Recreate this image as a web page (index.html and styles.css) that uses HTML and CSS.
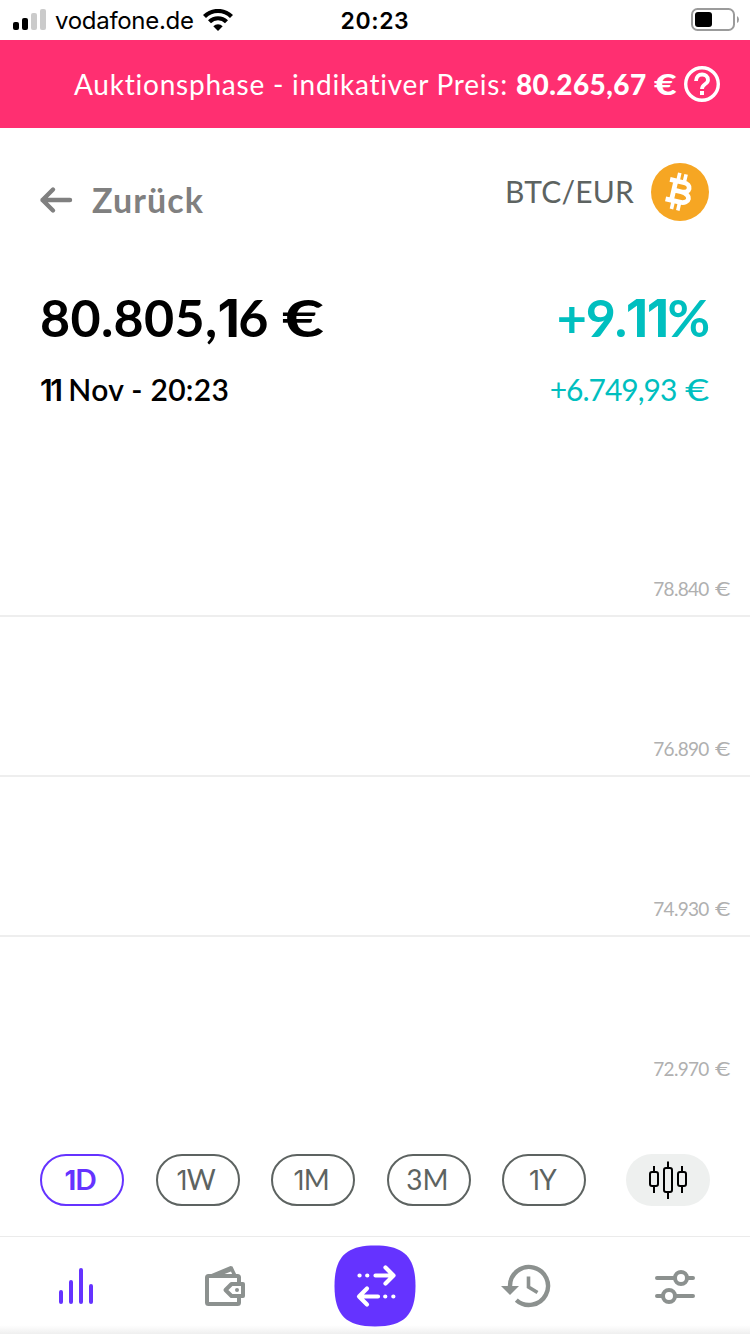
FILE: index.html
```
<!DOCTYPE html>
<html lang="de">
<head>
    <meta charset="UTF-8">
    <meta name="viewport" content="width=device-width, initial-scale=1.0">
    <title>BTC/EUR</title>
    <link rel="stylesheet" href="styles.css">
</head>
<body>
    <div class="status-bar">
        <div class="carrier">
            <svg class="signal" width="34" height="22" viewBox="0 0 34 22">
                <rect x="0" y="13" width="6" height="8" rx="2"/>
                <rect x="9" y="9" width="6" height="12" rx="2"/>
                <rect x="18" y="4" width="6" height="17" rx="2" fill="#cbcbcb"/>
                <rect x="27" y="0" width="6" height="21" rx="2" fill="#cbcbcb"/>
            </svg>
            <span class="carrier-name">vodafone.de</span>
            <svg class="wifi" width="30" height="22" viewBox="0 0 30 22">
                <path d="M1.5 7.6 A19 19 0 0 1 28.5 7.6" fill="none" stroke="#000" stroke-width="4.2"/>
                <path d="M6.5 12.8 A12 12 0 0 1 23.5 12.8" fill="none" stroke="#000" stroke-width="4.2"/>
                <path d="M10.3 17.2 A6.8 6.8 0 0 1 19.7 17.2 L15 22 Z"/>
            </svg>
        </div>
        <div class="clock">20:23</div>
        <svg class="battery" width="49" height="24" viewBox="0 0 49 24">
            <rect x="1" y="1" width="42" height="21" rx="5.5" fill="none" stroke="#9b9b9b" stroke-width="2"/>
            <rect x="4" y="4" width="17" height="15" rx="3"/>
            <path d="M46 8 Q48 9 48 11.5 T46 15 Z" fill="#9b9b9b"/>
        </svg>
    </div>

    <div class="banner">
        <span class="banner-text">Auktionsphase - indikativer Preis:</span>
        <span class="banner-price">80.265,67 <span class="euro">€</span></span>
        <svg class="help" width="36" height="36" viewBox="0 0 36 36" fill="none" stroke="#fff">
            <circle cx="18" cy="18" r="16.3" stroke-width="3.4"/>
            <path d="M12 15 C12 6.5 24 6.5 24 14 C24 18.5 18 17.5 18 23" stroke-width="3.8"/>
            <rect x="16" y="25" width="4" height="4" fill="#fff" stroke="none"/>
        </svg>
    </div>

    <main>
        <header>
            <div class="back">
                <svg width="34" height="28" viewBox="0 0 34 28" fill="none" stroke="#808080" stroke-width="4.4" stroke-linecap="round" stroke-linejoin="round">
                    <path d="M31 14 H3.5 M14 3.5 L3.5 14 L14 24.5"/>
                </svg>
                <span class="back-text">Zurück</span>
            </div>
            <div class="pair">
                <span class="pair-name">BTC/EUR</span>
                <svg width="58" height="58" viewBox="0 0 58 58">
                    <circle cx="29" cy="29" r="29" fill="#f6a623"/>
                    <g transform="rotate(13 29 29)" fill="none" stroke="#fff">
                        <path d="M16.5 19 H30 C39.5 19 39.5 28.5 30 28.5 H23 M30 28.5 C41.5 28.5 41.5 39 31 39 H16.5 M22.5 19 V39" stroke-width="4.8"/>
                        <path d="M24.5 10.5 V19 M31 10.5 V19 M24.5 39 V47.5 M31 39 V47.5" stroke-width="3.6"/>
                    </g>
                </svg>
            </div>
        </header>

        <section class="quote">
            <div class="quote-row">
                <span class="price">80.805,<span class="one">1</span>6 <span class="euro">€</span></span>
                <span class="percent">+9.<span class="one">11</span>%</span>
            </div>
            <div class="quote-row">
                <span class="date"><span class="one">11</span> Nov - 20:23</span>
                <span class="change">+6.749,93 <span class="euro">€</span></span>
            </div>
        </section>

        <section class="chart">
            <div class="grid-row"><span>78.840 <span class="euro">€</span></span></div>
            <div class="grid-row"><span>76.890 <span class="euro">€</span></span></div>
            <div class="grid-row"><span>74.930 <span class="euro">€</span></span></div>
            <div class="grid-row"><span>72.970 <span class="euro">€</span></span></div>
        </section>

        <section class="ranges">
            <button class="range active"><span class="one">1</span>D</button>
            <button class="range"><span class="one">1</span>W</button>
            <button class="range"><span class="one">1</span>M</button>
            <button class="range">3M</button>
            <button class="range"><span class="one">1</span>Y</button>
            <button class="candles">
                <svg width="40" height="40" viewBox="0 0 40 40" fill="none" stroke="#000" stroke-width="2">
                    <rect x="2" y="12" width="8" height="14" rx="2"/>
                    <path d="M6 6 V12 M6 26 V33"/>
                    <rect x="16" y="8" width="8" height="24" rx="2"/>
                    <path d="M20 1.5 V8 M20 32 V39"/>
                    <rect x="30" y="12" width="8" height="14" rx="2"/>
                    <path d="M34 6 V12 M34 26 V33"/>
                </svg>
            </button>
        </section>
    </main>

    <nav>
        <a class="tab">
            <svg width="36" height="36" viewBox="-2 0 36 36" stroke="#6533ff" stroke-width="4" stroke-linecap="round">
                <path d="M2 24 V34 M12 14 V34 M22 2 V34 M32 18 V34"/>
            </svg>
        </a>
        <a class="tab">
            <svg width="40" height="40" viewBox="0 0 40 40" fill="none" stroke="#8c918f" stroke-width="4" stroke-linejoin="round">
                <rect x="2" y="10" width="32" height="28" rx="1.5"/>
                <path d="M4 9 L25.5 0 L27.5 0.5 L32 10 H28 L26 5.5 L17 9 Z" fill="#8c918f" stroke="none"/>
                <path d="M38 18 H26.5 L20.5 24 L26.5 30 H38 Z" fill="#fff"/>
                <circle cx="32" cy="24" r="2" fill="#8c918f" stroke="none"/>
            </svg>
        </a>
        <a class="tab">
            <svg width="82" height="82" viewBox="0 0 82 82">
                <path d="M41 0.5 C70 0.5 81.5 12 81.5 41 C81.5 70 70 81.5 41 81.5 C12 81.5 0.5 70 0.5 41 C0.5 12 12 0.5 41 0.5 Z" fill="#6533ff"/>
                <g fill="none" stroke="#fff" stroke-width="4.2" stroke-linecap="round" stroke-linejoin="round">
                    <path d="M41.5 30.5 H59 M51.5 22.5 L59.5 30.5 L51.5 38.5"/>
                    <path d="M44 51.5 H26 M33 43.5 L25 51.5 L33 59.5"/>
                    <path d="M25.5 30.5 h0.1 M33.2 30.5 h0.1 M51.2 51.5 h0.1 M59.3 51.5 h0.1"/>
                </g>
            </svg>
        </a>
        <a class="tab">
            <svg width="52" height="44" viewBox="-2 -2 52 44" fill="none" stroke="#8c918f" stroke-width="4.4">
                <path d="M9 20 A19 19 0 1 1 15.3 34.1"/>
                <path d="M0 20 H18 L9 29 Z" fill="#8c918f" stroke="none"/>
                <path d="M27.5 10.5 V21 L36.5 26.5" stroke-width="3.6"/>
            </svg>
        </a>
        <a class="tab">
            <svg width="40" height="36" viewBox="0 -2 40 36" fill="none" stroke="#8c918f" stroke-width="4" stroke-linecap="round">
                <circle cx="26" cy="8" r="6"/>
                <path d="M2 8 H20 M32 8 H38"/>
                <circle cx="14" cy="26" r="6"/>
                <path d="M2 26 H8 M20 26 H38"/>
            </svg>
        </a>
    </nav>
</body>
</html>
```
FILE: styles.css
```
* {
    box-sizing: border-box;
}
body {
    font-family: Lato, "Open Sans", sans-serif;
    background-color: #fff;
    color: #000;
    margin: 0;
    height: 1334px;
    overflow: hidden;
    display: flex;
    flex-direction: column;
    white-space: nowrap;
}
svg {
    display: block;
    flex: none;
}
/* wide euro sign */
.euro {
    display: inline-block;
    width: 0.8em;
    letter-spacing: 0;
    transform: scaleX(1.4);
    transform-origin: 0 50%;
}
/* narrow one without a foot */
.one {
    font-family: Inter, sans-serif;
    line-height: 1;
    letter-spacing: -0.03em;
}
.status-bar {
    font-family: Inter, sans-serif;
    height: 40px;
    padding: 0 10px 0 13px;
    display: grid;
    grid-template-columns: 1fr 72px 1fr;
    align-items: center;
}
.carrier {
    display: flex;
    align-items: center;
}
.carrier-name {
    font-size: 24px;
    letter-spacing: -0.3px;
    width: 139px;
    margin: 0 9px 0 8px;
}
.clock {
    font-size: 23px;
    font-weight: 600;
    letter-spacing: 0.6px;
    padding-top: 2px;
}
.battery {
    justify-self: end;
}
.banner {
    height: 88px;
    padding-right: 30px;
    background: #ff2f71;
    color: #fff;
    font-size: 28px;
    display: flex;
    justify-content: flex-end;
    align-items: center;
}
.banner-text {
    letter-spacing: 0.78px;
}
.banner-price {
    font-weight: 900;
    letter-spacing: 0.4px;
    margin: 0 8px 0 8px;
}
header {
    height: 144px;
    padding: 35px 41px 0 39px;
    display: flex;
    justify-content: space-between;
    align-items: flex-start;
}
.back {
    height: 74px;
    display: flex;
    align-items: center;
    gap: 19px;
    color: #808080;
}
.back-text {
    font-size: 34px;
    font-weight: 700;
    letter-spacing: 1.1px;
    padding-bottom: 2px;
}
.pair {
    display: flex;
    align-items: center;
    gap: 17px;
}
.pair-name {
    font-size: 30px;
    letter-spacing: 0.2px;
    padding-bottom: 2px;
    color: #5d6361;
}
.quote {
    height: 185px;
    padding: 0 41px 0 40px;
}
.quote-row {
    display: flex;
    justify-content: space-between;
    align-items: center;
    height: 92px;
    padding-bottom: 3px;
}
.quote-row + .quote-row {
    height: 52px;
}
.price {
    font-size: 52px;
    font-weight: 700;
    letter-spacing: 0.3px;
}
.percent {
    font-size: 52px;
    font-weight: 700;
    letter-spacing: -1.2px;
    color: #00bfbf;
}
.date {
    font-size: 30px;
    font-weight: 600;
    letter-spacing: 0.3px;
}
.date .one {
    letter-spacing: -0.08em;
}
.change {
    font-size: 30px;
    letter-spacing: -1px;
    color: #00bfbf;
}
.change .euro {
    margin-left: 2px;
}
.grid-row {
    height: 160px;
    padding: 0 20px 15px 0;
    border-bottom: 2px solid #eee;
    display: flex;
    justify-content: flex-end;
    align-items: flex-end;
    font-size: 19px;
    letter-spacing: -0.7px;
    color: #b0b0b0;
}
.grid-row .euro {
    margin-left: 2px;
}
.grid-row:last-child {
    border-color: transparent;
}
.ranges {
    padding: 57px 40px 0;
    display: flex;
}
.range, .candles {
    width: 84px;
    height: 52px;
    padding: 0 3px 2px 0;
    margin-right: 31.6px;
    border: 2px solid #5d6361;
    border-radius: 26px;
    background: #fff;
    color: #5d6361;
    font-family: Lato, "Open Sans", sans-serif;
    font-size: 28px;
}
.range .one {
    font-size: 27px;
}
.range.active {
    border-color: #6533ff;
    color: #6533ff;
    font-weight: 700;
}
.candles {
    padding: 0;
    margin: 0 0 0 auto;
    border: none;
    background: #eef0ef;
    display: flex;
    align-items: center;
    justify-content: center;
}
nav {
    height: 98px;
    margin-top: auto;
    border-top: 1px solid #ebebeb;
    background: linear-gradient(#fff 91%, #efefef);
    display: grid;
    grid-template-columns: repeat(5, 1fr);
}
.tab {
    display: flex;
    align-items: center;
    justify-content: center;
}
```
